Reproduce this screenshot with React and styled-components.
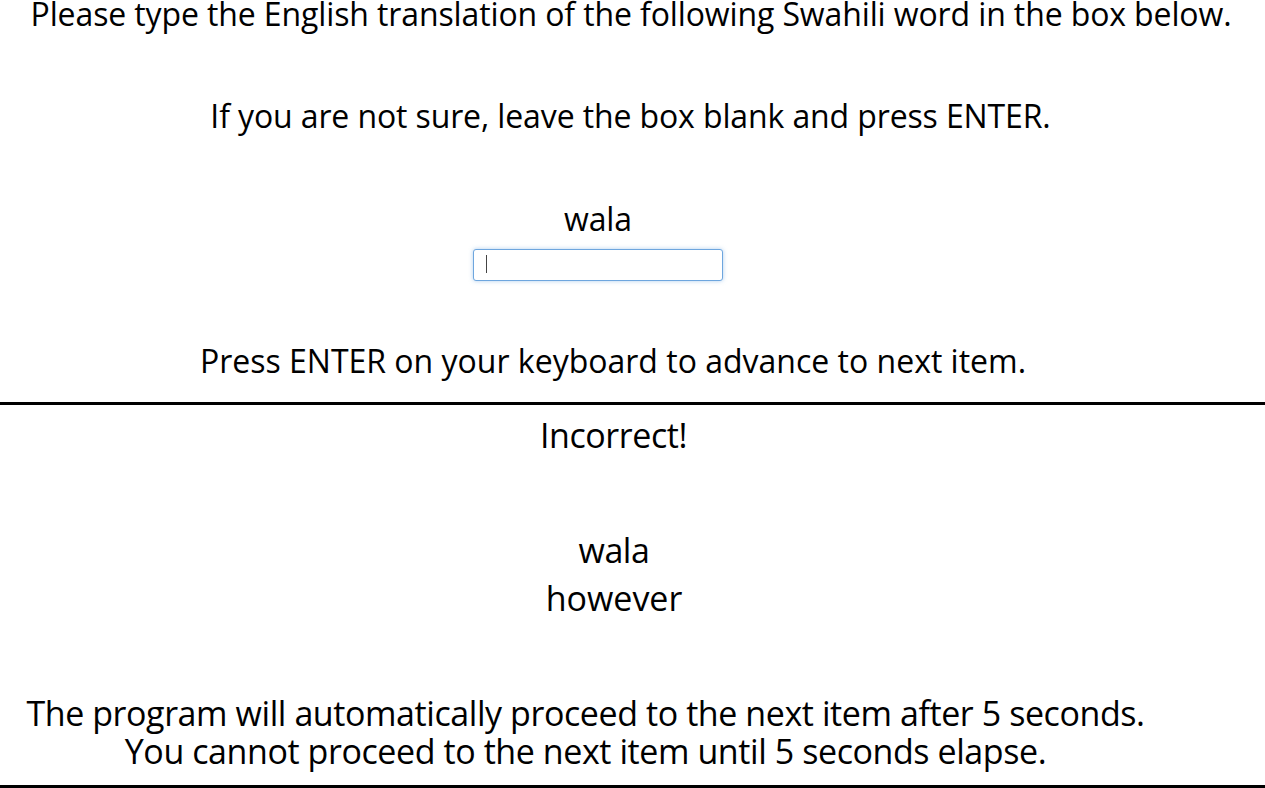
import React from "react";
import styled, { createGlobalStyle } from "styled-components";

const Global = createGlobalStyle`
  html, body {
    margin: 0;
    padding: 0;
    background: #fff;
    overflow: hidden;
  }
  body {
    font-family: "Open Sans", "Liberation Sans", sans-serif;
    color: #000;
  }
`;

const Page = styled.div`
  width: 1265px;
  display: flex;
  flex-direction: column;
  margin-top: -8px;
`;

// A centred block of text; $shift moves its centre left of the page centre.
const Block = styled.div`
  display: flex;
  flex-direction: column;
  align-items: center;
  text-align: center;
  padding-right: ${(p) => (p.$shift || 0) * 2}px;
  margin-top: ${(p) => p.$gap || 0}px;
`;

// Prompt text above the rule is a touch smaller than the feedback below it.
const Prompt = styled.div`
  font-size: 32px;
  line-height: 44px;
  letter-spacing: ${(p) => (p.$ls ?? -0.12)}px;
  white-space: nowrap;
`;

const Feedback = styled.div`
  font-size: 34px;
  line-height: ${(p) => p.$lh || 48}px;
  letter-spacing: ${(p) => (p.$ls ?? -0.42)}px;
  white-space: nowrap;
`;

const Field = styled.div`
  position: relative;
  margin-top: 8px;
  width: 250px;
  height: 32px;
`;

const Input = styled.input`
  box-sizing: border-box;
  width: 100%;
  height: 100%;
  border: 1px solid #6ea6de;
  border-radius: 3px;
  box-shadow: 0 0 4px rgba(110, 166, 222, 0.55);
  outline: none;
  caret-color: transparent;
  padding: 0 12px;
  font-family: "Open Sans", sans-serif;
  font-size: 16px;
`;

const Caret = styled.span`
  position: absolute;
  left: 13px;
  top: 6px;
  width: 1px;
  height: 18px;
  background: #444;
`;

const Rule = styled.hr`
  margin: ${(p) => p.$gap || 0}px 0 0;
  border: 0;
  height: 3px;
  background: #000;
`;

export default function App() {
  return (
    <>
      <Global />
      <Page>
        <Block $shift={1.5}>
          <Prompt>Please type the English translation of the following Swahili word in the box below.</Prompt>
        </Block>
        <Block $shift={2} $gap={58}>
          <Prompt>If you are not sure, leave the box blank and press ENTER.</Prompt>
        </Block>
        <Block $shift={34.5} $gap={59}>
          <Prompt>wala</Prompt>
          <Field>
            <Input type="text" readOnly aria-label="translation" />
            <Caret />
          </Field>
        </Block>
        <Block $shift={19.5} $gap={58}>
          <Prompt $ls={0}>Press ENTER on your keyboard to advance to next item.</Prompt>
        </Block>
        <Rule $gap={19} />
        <Block $shift={19} $gap={6}>
          <Feedback>Incorrect!</Feedback>
        </Block>
        <Block $shift={18.5} $gap={67}>
          <Feedback>wala</Feedback>
          <Feedback $ls={0}>however</Feedback>
        </Block>
        <Block $shift={47} $gap={72}>
          <Feedback $lh={38}>The program will automatically proceed to the next item after 5 seconds.</Feedback>
          <Feedback $lh={38}>You cannot proceed to the next item until 5 seconds elapse.</Feedback>
        </Block>
        <Rule $gap={15} />
      </Page>
    </>
  );
}
